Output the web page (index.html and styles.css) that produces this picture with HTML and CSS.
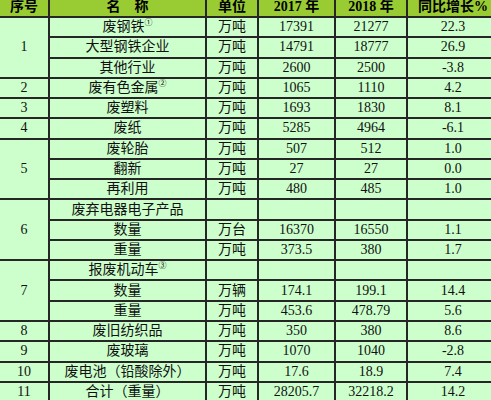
FILE: index.html
```html
<!DOCTYPE html>
<html lang="zh-CN">
<head>
<meta charset="utf-8">
<title>主要再生资源回收量</title>
<link rel="stylesheet" href="styles.css">
</head>
<body>
<table class="stats">
  <colgroup>
    <col class="c-no"><col class="c-name"><col class="c-unit"><col class="c-y1"><col class="c-y2"><col class="c-pct">
  </colgroup>
  <thead>
    <tr class="head"><th>序号</th><th>名　称</th><th>单位</th><th>2017 年</th><th>2018 年</th><th>同比增长%</th></tr>
  </thead>
  <tbody>
    <tr><td rowspan="3">1</td><td>废钢铁<sup>①</sup></td><td>万吨</td><td>17391</td><td>21277</td><td>22.3</td></tr>
    <tr><td>大型钢铁企业</td><td>万吨</td><td>14791</td><td>18777</td><td>26.9</td></tr>
    <tr><td>其他行业</td><td>万吨</td><td>2600</td><td>2500</td><td>-3.8</td></tr>
    <tr><td>2</td><td>废有色金属<sup>②</sup></td><td>万吨</td><td>1065</td><td>1110</td><td>4.2</td></tr>
    <tr><td>3</td><td>废塑料</td><td>万吨</td><td>1693</td><td>1830</td><td>8.1</td></tr>
    <tr><td>4</td><td>废纸</td><td>万吨</td><td>5285</td><td>4964</td><td>-6.1</td></tr>
    <tr><td rowspan="3">5</td><td>废轮胎</td><td>万吨</td><td>507</td><td>512</td><td>1.0</td></tr>
    <tr><td>翻新</td><td>万吨</td><td>27</td><td>27</td><td>0.0</td></tr>
    <tr><td>再利用</td><td>万吨</td><td>480</td><td>485</td><td>1.0</td></tr>
    <tr><td rowspan="3">6</td><td>废弃电器电子产品</td><td></td><td></td><td></td><td></td></tr>
    <tr><td>数量</td><td>万台</td><td>16370</td><td>16550</td><td>1.1</td></tr>
    <tr><td>重量</td><td>万吨</td><td>373.5</td><td>380</td><td>1.7</td></tr>
    <tr><td rowspan="3">7</td><td>报废机动车<sup>③</sup></td><td></td><td></td><td></td><td></td></tr>
    <tr><td>数量</td><td>万辆</td><td>174.1</td><td>199.1</td><td>14.4</td></tr>
    <tr><td>重量</td><td>万吨</td><td>453.6</td><td>478.79</td><td>5.6</td></tr>
    <tr><td>8</td><td>废旧纺织品</td><td>万吨</td><td>350</td><td>380</td><td>8.6</td></tr>
    <tr><td>9</td><td>废玻璃</td><td>万吨</td><td>1070</td><td>1040</td><td>-2.8</td></tr>
    <tr><td>10</td><td>废电池（铅酸除外）</td><td>万吨</td><td>17.6</td><td>18.9</td><td>7.4</td></tr>
    <tr><td>11</td><td>合计（重量）</td><td>万吨</td><td>28205.7</td><td>32218.2</td><td>14.2</td></tr>
  </tbody>
</table>
</body>
</html>
```
FILE: styles.css
```css
html, body {
  margin: 0;
  padding: 0;
  background: #ccffcc;
  overflow: hidden;
}

.stats {
  border-collapse: collapse;
  border-style: hidden;
  table-layout: fixed;
  width: 498px;
  font-family: "Liberation Serif", "Noto Sans CJK SC", serif;
  font-size: 14px;
  color: #111;
  background: #ccffcc;
}

.c-no { width: 49px; }
.c-name { width: 157px; }
.c-unit { width: 52px; }
.c-y1 { width: 77px; }
.c-y2 { width: 72px; }
.c-pct { width: 91px; }

.stats th,
.stats td {
  border: 2px solid #262626;
  padding: 0;
  text-align: center;
  vertical-align: middle;
  white-space: nowrap;
  line-height: 16px;
}

.head {
  height: 17px;
  background: #99cc33;
}

.head th {
  font-weight: bold;
  color: #000;
  line-height: 14px;
  vertical-align: top;
}

.stats tbody tr {
  height: 20.28px;
}

.stats sup {
  font-size: 8px;
  line-height: 0;
  vertical-align: 6px;
}
```
